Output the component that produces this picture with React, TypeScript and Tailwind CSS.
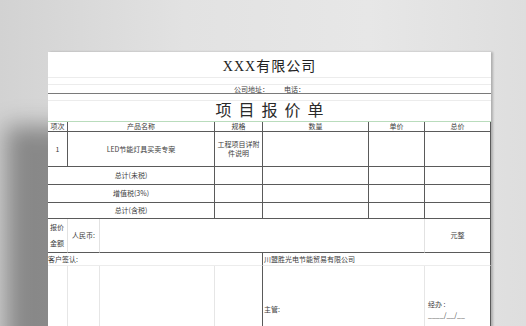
import type { ReactNode } from 'react'

const cjk = "font-['Noto_Sans_CJK_SC','Noto_Sans',sans-serif]"

function Cell({ className = '', children }: { className?: string; children?: ReactNode }) {
  return (
    <div className={`flex items-center justify-center text-[7px] leading-[9px] text-[#3c3c3c] ${cjk} ${className}`}>
      {children}
    </div>
  )
}

// dark grid line on right + bottom
const dk = 'border-r border-b border-[#5a5a5a]'

export default function App() {
  return (
    <div className="h-[326px] w-[526px] overflow-hidden bg-[linear-gradient(90deg,#d2d2d2_0%,#e2e2e2_35%,#e7e7e7_70%,#dedede_100%)]">
      <div className="ml-[48px] mt-[52px] w-[443px] bg-white shadow-[-42px_74px_22px_rgba(0,0,0,0.36),2px_0_2px_rgba(0,0,0,0.22)]">
        {/* header block */}
        <div className="flex h-[26px] items-center justify-center border-b border-[#ececec] pt-[4px]">
          <span className="font-['Liberation_Serif','Noto_Sans_CJK_SC',serif] text-[14px] leading-none tracking-[1px] text-[#222]">
            XXX有限公司
          </span>
        </div>
        <div className="h-[7px] border-b border-[#ececec]" />
        <div className={`flex h-[9px] items-end justify-center gap-[15px] border-b border-[#7a7a7a] text-[7px] leading-[8px] text-[#444] ${cjk}`}>
          <span>公司地址：</span>
          <span>电话：</span>
        </div>
        <div className="h-[7px] border-b border-[#ececec]" />
        <div className="flex h-[21px] items-center justify-center border-b border-[#b9dcbc] pl-[7px]">
          <span className="font-['Liberation_Serif','Noto_Sans_CJK_SC',serif] text-[16px] leading-none tracking-[7px] text-[#2a2a2a]">
            项目报价单
          </span>
        </div>

        {/* table */}
        <div className="grid grid-cols-[20px_32px_115px_48px_106px_56px_66px] grid-rows-[10px_35px_18px_18px_16px_34px_13px_70px]">
          <Cell className={dk}>项次</Cell>
          <Cell className={`col-span-2 ${dk}`}>产品名称</Cell>
          <Cell className={dk}>规格</Cell>
          <Cell className={dk}>数量</Cell>
          <Cell className={dk}>单价</Cell>
          <Cell className={dk}>总价</Cell>

          <Cell className={dk}>1</Cell>
          <Cell className={`col-span-2 ${dk}`}>LED节能灯具买卖专案</Cell>
          <Cell className={`px-[2px] text-center ${dk}`}>工程项目详附件说明</Cell>
          <Cell className={dk} />
          <Cell className={dk} />
          <Cell className={dk} />

          <Cell className={`col-span-3 ${dk}`}>总计(未税)</Cell>
          <Cell className={dk} />
          <Cell className={dk} />
          <Cell className={dk} />
          <Cell className={dk} />

          <Cell className={`col-span-3 ${dk}`}>增值税(3%)</Cell>
          <Cell className={dk} />
          <Cell className={dk} />
          <Cell className={dk} />
          <Cell className={dk} />

          <Cell className={`col-span-3 ${dk}`}>总计(含税)</Cell>
          <Cell className={dk} />
          <Cell className={dk} />
          <Cell className={dk} />
          <Cell className={dk} />

          <Cell className={`flex-col !items-start !justify-around pl-[2px] text-[7.5px] ${dk} border-r-[#e2e2e2]`}>
            <span>报价</span>
            <span>金额</span>
          </Cell>
          <Cell className={`text-[7.5px] ${dk} border-r-[#e2e2e2]`}>人民币:</Cell>
          <Cell className={`col-span-4 ${dk} border-r-[#e2e2e2]`} />
          <Cell className={`text-[7.5px] ${dk}`}>元整</Cell>

          <Cell className={`col-span-4 !justify-start text-[7.5px] ${dk} border-b-[#ececec]`}>客户签认:</Cell>
          <Cell className={`col-span-3 !justify-start pl-[1px] ${dk} border-b-[#ececec]`}>川盟胜光电节能贸易有限公司</Cell>

          <Cell className="border-r border-[#e6e6e6]" />
          <Cell className="border-r border-[#e6e6e6]" />
          <Cell className="border-r border-[#e6e6e6]" />
          <Cell className="border-r border-[#5a5a5a]" />
          <Cell className="col-span-2 !items-start !justify-start border-r border-[#e6e6e6] pl-[1px] pt-[39px] text-[7.5px]">
            主管:
          </Cell>
          <Cell className="flex-col !items-start !justify-start border-r border-[#5a5a5a] pl-[3px] pt-[34px] text-[7.5px]">
            <span>经办 :</span>
            <span className="mt-[2px]">____/__/__</span>
          </Cell>
        </div>
      </div>
    </div>
  )
}
